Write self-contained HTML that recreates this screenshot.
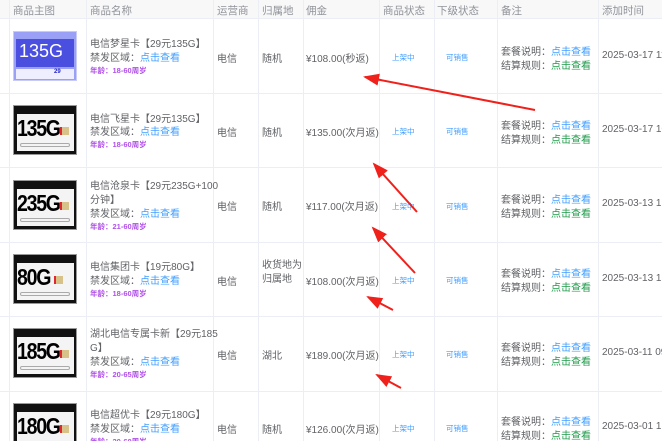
<!DOCTYPE html>
<html><head><meta charset="utf-8"><style>
*{margin:0;padding:0;box-sizing:border-box}
html,body{width:662px;height:441px;overflow:hidden}
body{background:#fff;font-family:"Liberation Sans","Noto Sans CJK SC",sans-serif;color:#606266;position:relative}
.a{position:absolute;white-space:nowrap}
.hd{position:absolute;left:0;top:0;width:662px;height:19px;background:#f8f8f9;border-bottom:1px solid #ebeef5}
.h{position:absolute;top:3px;font-size:10.5px;color:#909399}
.vl{position:absolute;top:0;width:1px;height:441px;background:#ebeef5}
.hl{position:absolute;left:0;width:662px;height:1px;background:#ebeef5}
.t{font-size:10px;color:#606266}
.b{color:#409eff}.g{color:#1f9a4a}
.p{font-size:7.5px;color:#b150e8;font-weight:bold}
.s{font-size:7.5px;color:#409eff}
.card{position:absolute;left:13px;width:64px;height:50px;background:#111;border:1px solid #999}
.card .w{position:absolute;left:3px;top:8px;width:57px;height:37px;background:#f4f4f4}
.card .n{position:absolute;left:3px;top:9px;font-size:23px;font-weight:bold;color:#000;letter-spacing:-1.5px;transform:scaleX(.85);transform-origin:left}
.card .c{position:absolute;left:46px;top:21px;width:9px;height:8px;background:#d9c28a;border-left:2px solid #e0262f}
.card .l{position:absolute;left:6px;top:37px;width:50px;height:4px;border:1px solid #aaa;border-radius:2px}
</style></head><body>
<div class="hd"></div>
<div class="h" style="left:13px">商品主图</div>
<div class="h" style="left:90px">商品名称</div>
<div class="h" style="left:217px">运营商</div>
<div class="h" style="left:262px">归属地</div>
<div class="h" style="left:306px">佣金</div>
<div class="h" style="left:383px">商品状态</div>
<div class="h" style="left:437px">下级状态</div>
<div class="h" style="left:501px">备注</div>
<div class="h" style="left:602px">添加时间</div>
<div class="vl" style="left:9px"></div><div class="vl" style="left:86px"></div><div class="vl" style="left:213px"></div><div class="vl" style="left:258px"></div><div class="vl" style="left:303px"></div><div class="vl" style="left:379px"></div><div class="vl" style="left:434px"></div><div class="vl" style="left:497px"></div><div class="vl" style="left:598px"></div>
<div class="hl" style="top:93px"></div><div class="hl" style="top:167px"></div><div class="hl" style="top:242px"></div><div class="hl" style="top:316px"></div><div class="hl" style="top:391px"></div>

<!-- row1 -->
<div style="position:absolute;left:13px;top:31px;width:64px;height:50px;background:#9aa0f5;border:1px solid #c8cbf8">
<div style="position:absolute;left:2px;top:7px;width:58px;height:28px;background:#4b4fe0"></div>
<div class="a" style="left:5px;top:9px;font-size:18px;color:#fff">135G</div>
<div style="position:absolute;left:2px;top:37px;width:58px;height:10px;background:#eef"></div>
<div class="a" style="left:40px;top:37px;font-size:6px;color:#22c;font-weight:bold">29</div></div>
<div class="a t" style="left:90px;top:35px">电信梦星卡【29元135G】</div>
<div class="a t" style="left:90px;top:49px">禁发区域：<span class="b">点击查看</span></div>
<div class="a p" style="left:90px;top:65px">年龄：18-60周岁</div>
<div class="a t" style="left:217px;top:50px">电信</div><div class="a t" style="left:262px;top:50px">随机</div>
<div class="a t" style="left:306px;top:50px">¥108.00(秒返)</div>
<div class="a s" style="left:392px;top:52px">上架中</div><div class="a s" style="left:446px;top:52px">可销售</div>
<div class="a t" style="left:501px;top:43px">套餐说明：<span class="b">点击查看</span></div>
<div class="a t" style="left:501px;top:57px">结算规则：<span class="g">点击查看</span></div>
<div class="a t" style="left:602px;top:50px">2025-03-17 11:1</div>

<!-- row2 -->
<div class="card" style="top:105px"><div class="w"></div><div class="n">135G</div><div class="c"></div><div class="l"></div></div>
<div class="a t" style="left:90px;top:110px">电信飞星卡【29元135G】</div>
<div class="a t" style="left:90px;top:123px">禁发区域：<span class="b">点击查看</span></div>
<div class="a p" style="left:90px;top:139px">年龄：18-60周岁</div>
<div class="a t" style="left:217px;top:124px">电信</div><div class="a t" style="left:262px;top:124px">随机</div>
<div class="a t" style="left:306px;top:124px">¥135.00(次月返)</div>
<div class="a s" style="left:392px;top:126px">上架中</div><div class="a s" style="left:446px;top:126px">可销售</div>
<div class="a t" style="left:501px;top:117px">套餐说明：<span class="b">点击查看</span></div>
<div class="a t" style="left:501px;top:131px">结算规则：<span class="g">点击查看</span></div>
<div class="a t" style="left:602px;top:124px">2025-03-17 10:</div>

<!-- row3 -->
<div class="card" style="top:180px"><div class="w"></div><div class="n">235G</div><div class="c"></div><div class="l"></div></div>
<div class="a t" style="left:90px;top:177px">电信沧泉卡【29元235G+100</div>
<div class="a t" style="left:90px;top:191px">分钟】</div>
<div class="a t" style="left:90px;top:205px">禁发区域：<span class="b">点击查看</span></div>
<div class="a p" style="left:90px;top:221px">年龄：21-60周岁</div>
<div class="a t" style="left:217px;top:198px">电信</div><div class="a t" style="left:262px;top:198px">随机</div>
<div class="a t" style="left:306px;top:198px">¥117.00(次月返)</div>
<div class="a s" style="left:392px;top:201px">上架中</div><div class="a s" style="left:446px;top:201px">可销售</div>
<div class="a t" style="left:501px;top:191px">套餐说明：<span class="b">点击查看</span></div>
<div class="a t" style="left:501px;top:205px">结算规则：<span class="g">点击查看</span></div>
<div class="a t" style="left:602px;top:198px">2025-03-13 17:</div>

<!-- row4 -->
<div class="card" style="top:254px"><div class="w"></div><div class="n">80G</div><div class="c" style="left:40px"></div><div class="l"></div></div>
<div class="a t" style="left:90px;top:258px">电信集团卡【19元80G】</div>
<div class="a t" style="left:90px;top:272px">禁发区域：<span class="b">点击查看</span></div>
<div class="a p" style="left:90px;top:288px">年龄：18-60周岁</div>
<div class="a t" style="left:217px;top:273px">电信</div>
<div class="a t" style="left:262px;top:259px;line-height:14px">收货地为<br>归属地</div>
<div class="a t" style="left:306px;top:273px">¥108.00(次月返)</div>
<div class="a s" style="left:392px;top:275px">上架中</div><div class="a s" style="left:446px;top:275px">可销售</div>
<div class="a t" style="left:501px;top:265px">套餐说明：<span class="b">点击查看</span></div>
<div class="a t" style="left:501px;top:279px">结算规则：<span class="g">点击查看</span></div>
<div class="a t" style="left:602px;top:273px">2025-03-13 15:</div>

<!-- row5 -->
<div class="card" style="top:328px"><div class="w"></div><div class="n">185G</div><div class="c"></div><div class="l"></div></div>
<div class="a t" style="left:90px;top:325px">湖北电信专属卡新【29元185</div>
<div class="a t" style="left:90px;top:339px">G】</div>
<div class="a t" style="left:90px;top:353px">禁发区域：<span class="b">点击查看</span></div>
<div class="a p" style="left:90px;top:369px">年龄：20-65周岁</div>
<div class="a t" style="left:217px;top:347px">电信</div><div class="a t" style="left:262px;top:347px">湖北</div>
<div class="a t" style="left:306px;top:347px">¥189.00(次月返)</div>
<div class="a s" style="left:392px;top:349px">上架中</div><div class="a s" style="left:446px;top:349px">可销售</div>
<div class="a t" style="left:501px;top:339px">套餐说明：<span class="b">点击查看</span></div>
<div class="a t" style="left:501px;top:353px">结算规则：<span class="g">点击查看</span></div>
<div class="a t" style="left:602px;top:347px">2025-03-11 09:</div>

<!-- row6 -->
<div class="card" style="top:403px"><div class="w"></div><div class="n">180G</div><div class="c"></div><div class="l"></div></div>
<div class="a t" style="left:90px;top:406px">电信超优卡【29元180G】</div>
<div class="a t" style="left:90px;top:420px">禁发区域：<span class="b">点击查看</span></div>
<div class="a p" style="left:90px;top:436px">年龄：20-60周岁</div>
<div class="a t" style="left:217px;top:421px">电信</div><div class="a t" style="left:262px;top:421px">随机</div>
<div class="a t" style="left:306px;top:421px">¥126.00(次月返)</div>
<div class="a s" style="left:392px;top:423px">上架中</div><div class="a s" style="left:446px;top:423px">可销售</div>
<div class="a t" style="left:501px;top:413px">套餐说明：<span class="b">点击查看</span></div>
<div class="a t" style="left:501px;top:427px">结算规则：<span class="g">点击查看</span></div>
<div class="a t" style="left:602px;top:421px">2025-03-01 12:</div>

<svg style="position:absolute;left:0;top:0" width="662" height="441">
<defs><marker id="m" markerWidth="8" markerHeight="6" refX="1" refY="3" orient="auto"><path d="M8,0 L0,3 L8,6 Z" fill="#f0201a"/></marker></defs>
<g stroke="#f0201a" stroke-width="2" fill="none" marker-start="url(#m)">
<line x1="365" y1="77" x2="535" y2="110"/>
<line x1="374" y1="164" x2="417" y2="212"/>
<line x1="373" y1="228" x2="415" y2="273"/>
<line x1="368" y1="297" x2="393" y2="310"/>
<line x1="377" y1="375" x2="401" y2="388"/>
</g></svg>
</body></html>
